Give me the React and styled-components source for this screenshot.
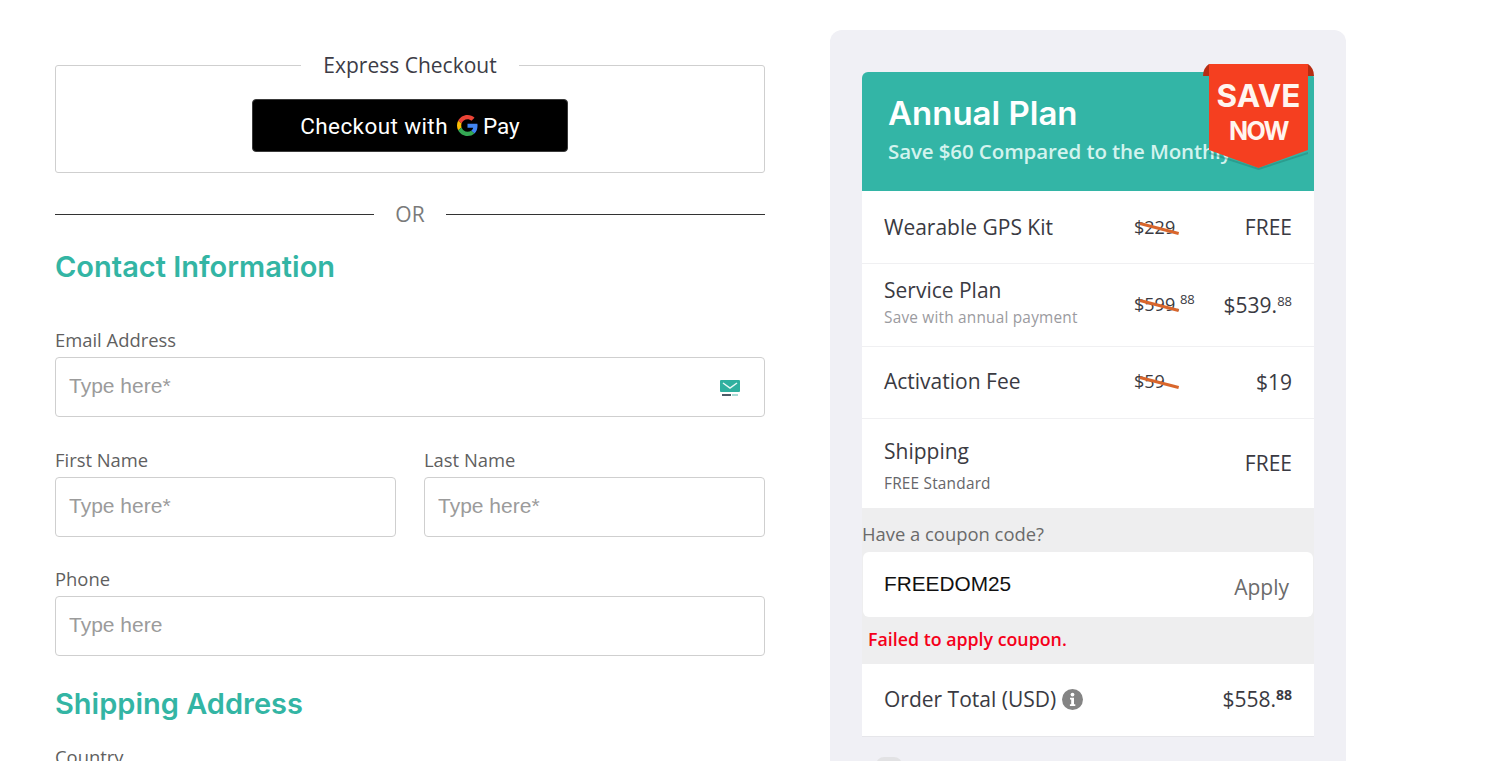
import React from "react";
import styled, { createGlobalStyle } from "styled-components";

const Global = createGlobalStyle`
  html, body { margin: 0; padding: 0; background: #fff; height: 761px; overflow: hidden; }
  * { box-sizing: border-box; }
  #root { height: 761px; overflow: hidden; font-family: "Open Sans", sans-serif; }
`;

const Page = styled.div`
  display: flex;
  align-items: flex-start;
  gap: 65px;
  padding: 30px 0 0 55px;
  height: 761px;
  overflow: hidden;
`;

const Left = styled.main`
  width: 710px;
  flex: none;
  padding-top: 21px;
`;

const Express = styled.fieldset`
  margin: 0;
  padding: 19px 0 20px;
  height: 122px;
  border: 1px solid #cfcfcf;
  border-radius: 3px;
  display: flex;
  justify-content: center;
`;

const ExpressLegend = styled.legend`
  margin: 0 auto;
  padding: 0 22px;
  font-size: 21px;
  line-height: 29px;
  color: #3c3c46;
`;

const PayButton = styled.button`
  width: 316px;
  height: 53px;
  background: #000;
  border: 1px solid #3a3a3a;
  border-radius: 4px;
  color: #fff;
  display: flex;
  align-items: center;
  justify-content: center;
  gap: 9px;
  padding: 0;
  font-family: Roboto, sans-serif;
  font-size: 22.5px;
  letter-spacing: 0.4px;
`;

const PayWord = styled.span`
  display: flex;
  align-items: center;
  gap: 5px;
  letter-spacing: 0;
`;

const OrRow = styled.div`
  display: flex;
  align-items: center;
  gap: 21px;
  margin-top: 26px;
  font-size: 21px;
  line-height: 30px;
  color: #7a7a7a;
  &::before, &::after {
    content: "";
    flex: 1;
    height: 1px;
    background: #333;
  }
`;

const Heading = styled.h2`
  margin: ${(p) => p.$top}px 0 0;
  font-family: Inter, sans-serif;
  font-weight: 600;
  font-size: 29px;
  line-height: 36px;
  color: #33b5a4;
`;

const Field = styled.label`
  display: block;
  flex: 1;
  margin-top: ${(p) => p.$top || 0}px;
  position: relative;
`;

const FieldLabel = styled.span`
  display: block;
  font-size: 18.4px;
  line-height: 24px;
  color: #5f5f5f;
  margin-bottom: 5px;
`;

const Input = styled.input`
  display: block;
  width: 100%;
  height: 60px;
  border: 1px solid #cfcfcf;
  border-radius: 4px;
  padding: 0 13px 2px;
  font-family: "Liberation Sans", sans-serif;
  font-size: 21px;
  background: #fff;
  &::placeholder { color: #9b9b9b; opacity: 1; }
`;

const MailBadge = styled.svg`
  position: absolute;
  right: 24px;
  bottom: 20px;
`;

const NameRow = styled.div`
  display: flex;
  gap: 28px;
  margin-top: 31px;
`;

const Panel = styled.aside`
  width: 516px;
  flex: none;
  height: 800px;
  background: #f0f0f5;
  border-radius: 12px;
  padding: 42px 32px 0;
`;

const Plan = styled.header`
  position: relative;
  height: 119px;
  background: #33b5a6;
  border-radius: 6px 6px 0 0;
  padding: 21px 26px 0;
  color: #fff;
`;

const PlanTitle = styled.h1`
  margin: 0;
  font-family: Inter, sans-serif;
  font-weight: 600;
  font-size: 33px;
  line-height: 40px;
`;

const PlanSub = styled.p`
  margin: 1px 0 0;
  font-size: 20.5px;
  line-height: 34px;
  font-weight: 600;
  letter-spacing: -0.1px;
  color: #d3f3ee;
  white-space: nowrap;
`;

const Ribbon = styled.div`
  position: absolute;
  right: 0;
  top: -8px;
  width: 111px;
  height: 106px;
  color: #fff5ef;
  text-align: center;
  font-family: Inter, sans-serif;
  font-weight: 700;
`;

const RibbonArt = styled.svg`
  position: absolute;
  inset: 0;
`;

const RibbonSave = styled.div`
  position: relative;
  padding-top: 12px;
  font-size: 31.5px;
  line-height: 40px;
`;

const RibbonNow = styled.div`
  position: relative;
  font-size: 25px;
  line-height: 30px;
  letter-spacing: -1.6px;
`;

const Rows = styled.div`
  background: #fff;
`;

const Row = styled.div`
  display: grid;
  grid-template-columns: 1fr 58px 100px;
  align-items: center;
  height: ${(p) => p.$h}px;
  padding: 0 22px ${(p) => p.$lift || 0}px;
  border-bottom: ${(p) => (p.$last ? "none" : "1px solid #f0f0f2")};
`;

const ItemBlock = styled.div`
  margin-bottom: ${(p) => p.$lift || 0}px;
  margin-top: ${(p) => p.$drop || 0}px;
`;

const ItemName = styled.div`
  font-size: 21px;
  line-height: 28px;
  color: #3a3a42;
`;

const ItemNote = styled.div`
  font-size: 15.4px;
  line-height: 22px;
  margin-top: ${(p) => p.$gap || 3}px;
  letter-spacing: 0.2px;
  color: ${(p) => p.$color || "#9b9b9f"};
`;

const OldPrice = styled.div`
  position: relative;
  justify-self: start;
  font-size: 18px;
  line-height: 25px;
  color: #3a3a42;
  white-space: nowrap;
  &::after {
    content: "";
    position: absolute;
    left: 6px;
    top: 7px;
    width: 40px;
    height: 2.5px;
    background: #d9662c;
    transform: rotate(14.5deg);
    transform-origin: left center;
  }
`;

const Price = styled.div`
  justify-self: end;
  font-size: 21px;
  color: #3a3a42;
  white-space: nowrap;
`;

const Cents = styled.sup`
  font-size: ${(p) => (p.$bold ? 14 : 13)}px;
  vertical-align: baseline;
  position: relative;
  top: -7px;
  font-weight: ${(p) => (p.$bold ? 700 : 400)};
`;

const CouponArea = styled.section`
  height: 156px;
  background: #eeeeef;
  padding-top: 12px;
`;

const CouponLabel = styled.div`
  font-size: 18.4px;
  line-height: 27px;
  color: #6a6a6a;
`;

const CouponBox = styled.div`
  display: flex;
  align-items: center;
  justify-content: space-between;
  height: 65px;
  margin: 5px 1px 0;
  padding: 0 24px 0 21px;
  background: #fff;
  border-radius: 6px;
`;

const CouponCode = styled.span`
  font-family: "Liberation Sans", sans-serif;
  font-size: 20.8px;
  color: #111;
  margin-bottom: 2px;
`;

const ApplyText = styled.span`
  font-size: 21px;
  color: #6b6b6b;
  margin-top: 4px;
`;

const CouponError = styled.div`
  margin: 9px 0 0 6px;
  font-size: 17.8px;
  line-height: 26px;
  font-weight: 600;
  color: #f5001a;
`;

const TotalRow = styled.div`
  display: flex;
  align-items: center;
  justify-content: space-between;
  height: 73px;
  padding: 0 22px 2px;
  background: #fff;
  border-bottom: 1px solid #e6e6ea;
`;

const TotalName = styled.div`
  display: flex;
  align-items: center;
  gap: 6px;
  font-size: 21px;
  color: #3a3a42;
`;

const Toggle = styled.div`
  width: 26px;
  height: 26px;
  margin: 20px 0 0 14px;
  border-radius: 8px;
  background: #e2e2e4;
`;

function GLogo() {
  return (
    <svg width="21" height="21" viewBox="0 0 48 48" aria-hidden="true">
      <path fill="#EA4335" d="M24 9.5c3.5 0 6.7 1.2 9.2 3.6l6.9-6.9C35.9 2.4 30.5 0 24 0 14.6 0 6.5 5.4 2.6 13.2l8 6.2C12.5 13.7 17.8 9.5 24 9.5z" />
      <path fill="#4285F4" d="M46.9 24.5c0-1.6-.1-3.1-.4-4.5H24v9h12.9c-.6 3-2.2 5.5-4.7 7.2l7.7 6c4.5-4.2 7-10.3 7-17.7z" />
      <path fill="#FBBC05" d="M10.5 28.6c-.5-1.4-.8-3-.8-4.6s.3-3.2.8-4.6l-8-6.2C.9 16.5 0 20.1 0 24s.9 7.5 2.6 10.8l7.9-6.2z" />
      <path fill="#34A853" d="M24 48c6.5 0 11.9-2.1 15.9-5.8l-7.7-6c-2.2 1.4-4.9 2.3-8.2 2.3-6.2 0-11.5-4.2-13.4-9.9l-8 6.2C6.5 42.6 14.6 48 24 48z" />
    </svg>
  );
}

function MailIcon() {
  return (
    <MailBadge width="22" height="17" viewBox="0 0 22 17" aria-hidden="true">
      <rect x="1" y="0" width="20" height="12" rx="1" fill="#2fb09f" />
      <path d="M4 3l7 5 7-5" fill="none" stroke="#e8f7f4" strokeWidth="1.5" />
      <rect x="3" y="14" width="9" height="2" fill="#4d5a66" />
      <rect x="13" y="14" width="6" height="2" fill="#a8dcd5" />
    </MailBadge>
  );
}

function InfoIcon() {
  return (
    <svg width="21" height="21" viewBox="0 0 21 21" aria-hidden="true">
      <circle cx="10.5" cy="10.5" r="10.5" fill="#848484" />
      <circle cx="10.5" cy="5.6" r="1.9" fill="#fff" />
      <path d="M8 8.8h4v6.4h1.3v1.7H7.9v-1.7h1.3v-4.7H8z" fill="#fff" />
    </svg>
  );
}

function RibbonShape() {
  return (
    <RibbonArt width="111" height="106" viewBox="0 0 111 106" aria-hidden="true">
      <path d="M0 12 Q0 4 6 0 L6 12Z M111 12 Q111 4 105 0 L105 12Z" fill="#b72c12" />
      <path d="M6 88L55.5 104 105 88V90L55.5 106 6 90Z" fill="#1d6f64" opacity=".35" />
      <path d="M6 0H105V86L55.5 104 6 86Z" fill="#f53f20" />
    </RibbonArt>
  );
}

export default function App() {
  return (
    <Page>
      <Global />
      <Left>
        <Express>
          <ExpressLegend>Express Checkout</ExpressLegend>
          <PayButton type="button">
            Checkout with
            <PayWord>
              <GLogo />
              Pay
            </PayWord>
          </PayButton>
        </Express>
        <OrRow>OR</OrRow>
        <Heading $top={20}>Contact Information</Heading>
        <Field $top={43}>
          <FieldLabel>Email Address</FieldLabel>
          <Input placeholder="Type here*" />
          <MailIcon />
        </Field>
        <NameRow>
          <Field>
            <FieldLabel>First Name</FieldLabel>
            <Input placeholder="Type here*" />
          </Field>
          <Field>
            <FieldLabel>Last Name</FieldLabel>
            <Input placeholder="Type here*" />
          </Field>
        </NameRow>
        <Field $top={30}>
          <FieldLabel>Phone</FieldLabel>
          <Input placeholder="Type here" />
        </Field>
        <Heading $top={30}>Shipping Address</Heading>
        <Field $top={23}>
          <FieldLabel>Country</FieldLabel>
        </Field>
      </Left>
      <Panel>
        <Plan>
          <PlanTitle>Annual Plan</PlanTitle>
          <PlanSub>Save $60 Compared to the Monthly Plan</PlanSub>
          <Ribbon>
            <RibbonShape />
            <RibbonSave>SAVE</RibbonSave>
            <RibbonNow>NOW</RibbonNow>
          </Ribbon>
        </Plan>
        <Rows>
          <Row $h={73}>
            <ItemName>Wearable GPS Kit</ItemName>
            <OldPrice>$229</OldPrice>
            <Price>FREE</Price>
          </Row>
          <Row $h={83}>
            <ItemBlock $lift={6}>
              <ItemName>Service Plan</ItemName>
              <ItemNote>Save with annual payment</ItemNote>
            </ItemBlock>
            <OldPrice>$599.<Cents>88</Cents></OldPrice>
            <Price>$539.<Cents>88</Cents></Price>
          </Row>
          <Row $h={72} $lift={2}>
            <ItemBlock $lift={1}>
              <ItemName>Activation Fee</ItemName>
            </ItemBlock>
            <OldPrice>$59</OldPrice>
            <Price>$19</Price>
          </Row>
          <Row $h={89} $lift={2} $last>
            <ItemBlock $drop={6}>
              <ItemName>Shipping</ItemName>
              <ItemNote $color="#66666a" $gap={8}>FREE Standard</ItemNote>
            </ItemBlock>
            <span />
            <Price>FREE</Price>
          </Row>
        </Rows>
        <CouponArea>
          <CouponLabel>Have a coupon code?</CouponLabel>
          <CouponBox>
            <CouponCode>FREEDOM25</CouponCode>
            <ApplyText>Apply</ApplyText>
          </CouponBox>
          <CouponError>Failed to apply coupon.</CouponError>
        </CouponArea>
        <TotalRow>
          <TotalName>Order Total (USD) <InfoIcon /></TotalName>
          <Price>$558.<Cents $bold>88</Cents></Price>
        </TotalRow>
        <Toggle />
      </Panel>
    </Page>
  );
}
